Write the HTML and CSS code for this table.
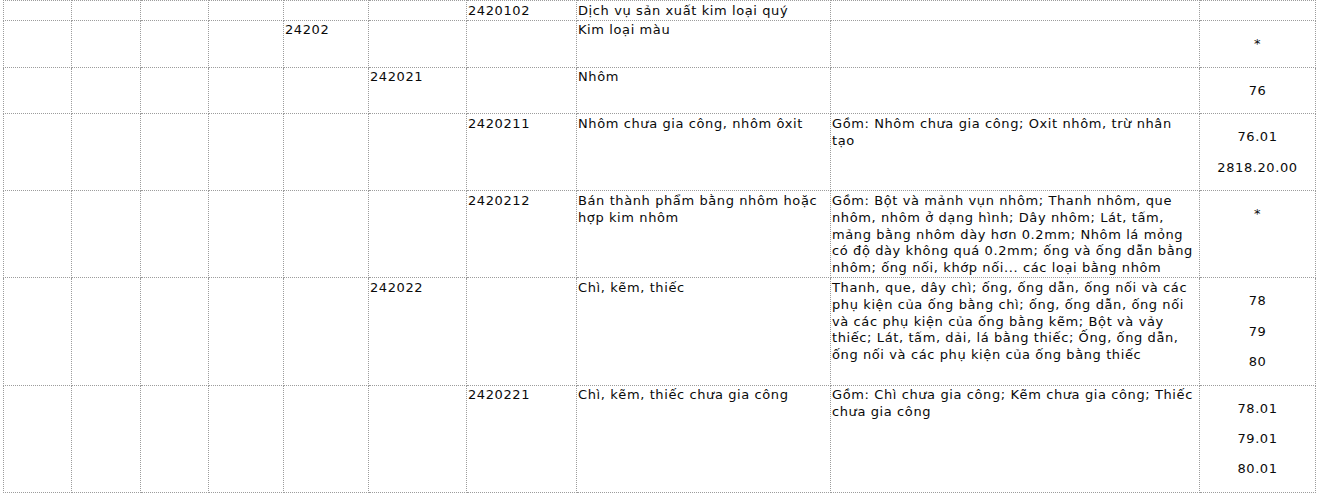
FILE: index.html
```html
<!DOCTYPE html>
<html lang="vi">
<head>
<meta charset="utf-8">
<title>Kim loại màu</title>
<link rel="stylesheet" href="styles.css">
</head>
<body>
<table class="grid">
  <colgroup>
    <col class="c1"><col class="c2"><col class="c3"><col class="c4"><col class="c5">
    <col class="c6"><col class="c7"><col class="c8"><col class="c9"><col class="c10">
  </colgroup>
  <tbody>
    <tr>
      <td></td><td></td><td></td><td></td><td></td><td></td>
      <td>2420102</td>
      <td>Dịch vụ sản xuất kim loại quý</td>
      <td></td>
      <td class="hs"></td>
    </tr>
    <tr>
      <td></td><td></td><td></td><td></td>
      <td>24202</td>
      <td></td><td></td>
      <td>Kim loại màu</td>
      <td></td>
      <td class="hs"><p>*</p></td>
    </tr>
    <tr>
      <td></td><td></td><td></td><td></td><td></td>
      <td>242021</td>
      <td></td>
      <td>Nhôm</td>
      <td></td>
      <td class="hs"><p>76</p></td>
    </tr>
    <tr>
      <td></td><td></td><td></td><td></td><td></td><td></td>
      <td>2420211</td>
      <td>Nhôm chưa gia công, nhôm ôxit</td>
      <td>Gồm: Nhôm chưa gia công; Oxit nhôm, trừ nhân tạo</td>
      <td class="hs"><p>76.01</p><p>2818.20.00</p></td>
    </tr>
    <tr>
      <td></td><td></td><td></td><td></td><td></td><td></td>
      <td>2420212</td>
      <td>Bán thành phẩm bằng nhôm hoặc hợp kim nhôm</td>
      <td>Gồm: Bột và mảnh vụn nhôm; Thanh nhôm, que nhôm, nhôm ở dạng hình; Dây nhôm; Lát, tấm, mảng bằng nhôm dày hơn 0.2mm; Nhôm lá mỏng có độ dày không quá 0.2mm; ống và ống dẫn bằng nhôm; ống nối, khớp nối... các loại bằng nhôm</td>
      <td class="hs"><p>*</p></td>
    </tr>
    <tr>
      <td></td><td></td><td></td><td></td><td></td>
      <td>242022</td>
      <td></td>
      <td>Chì, kẽm, thiếc</td>
      <td>Thanh, que, dây chì; ống, ống dẫn, ống nối và các phụ kiện của ống bằng chì; ống, ống dẫn, ống nối và các phụ kiện của ống bằng kẽm; Bột và vảy thiếc; Lát, tấm, dải, lá bằng thiếc; Ống, ống dẫn, ống nối và các phụ kiện của ống bằng thiếc</td>
      <td class="hs"><p>78</p><p>79</p><p>80</p></td>
    </tr>
    <tr>
      <td></td><td></td><td></td><td></td><td></td><td></td>
      <td>2420221</td>
      <td>Chì, kẽm, thiếc chưa gia công</td>
      <td>Gồm: Chì chưa gia công; Kẽm chưa gia công; Thiếc chưa gia công</td>
      <td class="hs"><p>78.01</p><p>79.01</p><p>80.01</p></td>
    </tr>
  </tbody>
</table>
</body>
</html>
```
FILE: styles.css
```css
html, body {
  margin: 0;
  padding: 0;
  background: #ffffff;
}
body {
  padding-left: 3px;
  font-family: "DejaVu Sans", Verdana, sans-serif;
  font-size: 13px;
  line-height: 16.8px;
  letter-spacing: 0.6px;
  color: #0a0a0a;
}
.grid {
  border-collapse: collapse;
  table-layout: fixed;
  width: 1312px;
}
.grid td {
  border: 1px dotted #9c9c9c;
  padding: 1.5px 1px 0.5px;
  vertical-align: top;
  text-align: left;
}
.c1 { width: 68px; }
.c2 { width: 69px; }
.c3 { width: 68px; }
.c4 { width: 75px; }
.c5 { width: 85px; }
.c6 { width: 98px; }
.c7 { width: 110px; }
.c8 { width: 254px; }
.c9 { width: 369px; }
.c10 { width: 116px; }
.grid td.hs {
  text-align: center;
}
.hs p {
  margin: 13.5px 0;
}
```
